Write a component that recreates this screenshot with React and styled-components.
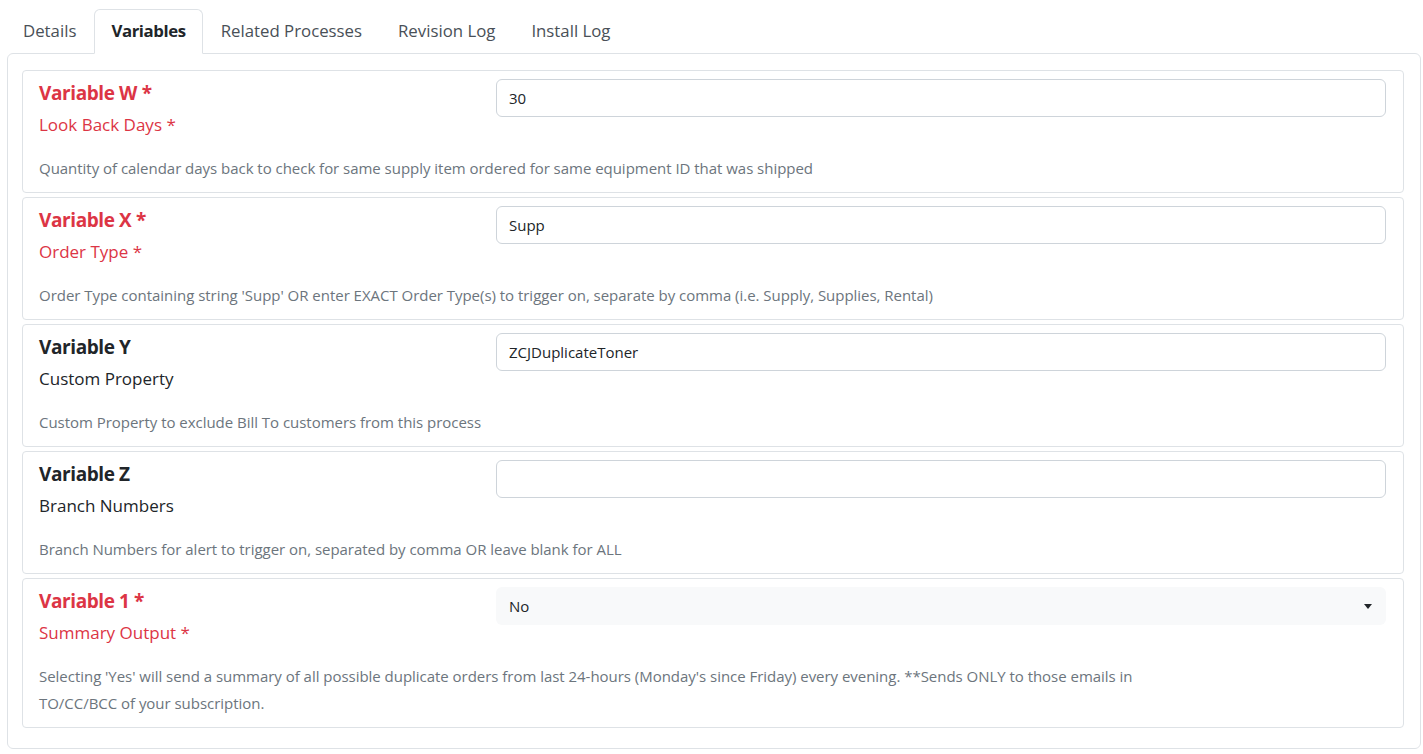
import React, { useState } from "react";
import styled, { createGlobalStyle } from "styled-components";

const GlobalStyle = createGlobalStyle`
  body {
    margin: 0;
    background: #ffffff;
    font-family: "Open Sans", "Noto Sans", sans-serif;
    color: #212529;
  }
`;

const Page = styled.div`
  padding: 9px 2px 5px 7px;
`;

const TabBar = styled.ul`
  display: flex;
  list-style: none;
  margin: 0 0 0 -2px;
  padding: 0;
  position: relative;
  z-index: 1;
`;

const Tab = styled.li`
  height: 45px;
  box-sizing: border-box;
  display: flex;
  align-items: center;
  padding: 0 ${(p) => (p.active ? 16 : 17)}px 2px;
  margin-bottom: -1px;
  font-size: 16.8px;
  color: ${(p) => (p.active ? "#212529" : "#495057")};
  font-weight: ${(p) => (p.active ? 700 : 400)};
  letter-spacing: ${(p) => (p.active ? "-0.4px" : "0")};
  border: 1px solid ${(p) => (p.active ? "#dee2e6" : "transparent")};
  border-bottom-color: ${(p) => (p.active ? "#ffffff" : "transparent")};
  border-radius: 6px 6px 0 0;
  background: ${(p) => (p.active ? "#ffffff" : "transparent")};
  cursor: pointer;
`;

const Card = styled.div`
  border: 1px solid #dee2e6;
  border-radius: 6px;
  padding: 16px 16px 20px 14px;
  display: flex;
  flex-direction: column;
  gap: 4px;
`;

const VarRow = styled.div`
  border: 1px solid #dee2e6;
  border-radius: 4px;
  padding: 7px 17px 10px 16px;
`;

const RowGrid = styled.div`
  display: grid;
  grid-template-columns: calc((100% + 24px) / 3 - 24px) 1fr;
  column-gap: 24px;
`;

const LabelCol = styled.div`
  display: flex;
  flex-direction: column;
`;

const VarTitle = styled.div`
  font-size: 19px;
  font-weight: 700;
  line-height: 30px;
  letter-spacing: -0.4px;
  color: ${(p) => (p.required ? "#dc3545" : "#212529")};
`;

const VarName = styled.div`
  margin-top: 4px;
  font-size: 17px;
  line-height: 26px;
  color: ${(p) => (p.required ? "#dc3545" : "#212529")};
`;

const TextInput = styled.input`
  margin-top: 1px;
  height: 38px;
  box-sizing: border-box;
  width: 100%;
  border: 1px solid #ced4da;
  border-radius: 6px;
  padding: 0 12px;
  font-family: inherit;
  font-size: 15px;
  color: #212529;
  background: #ffffff;
  outline: none;
`;

const SelectBox = styled.div`
  margin-top: 1px;
  height: 38px;
  box-sizing: border-box;
  width: 100%;
  border-radius: 6px;
  padding: 0 14px 0 13px;
  display: flex;
  align-items: center;
  justify-content: space-between;
  background: #f8f9fa;
  font-size: 15px;
  color: #212529;
  cursor: pointer;
`;

const Caret = styled.span`
  width: 0;
  height: 0;
  border-left: 4px solid transparent;
  border-right: 4px solid transparent;
  border-top: 5px solid #212529;
`;

const Description = styled.div`
  margin-top: 17px;
  font-size: 15px;
  line-height: 27px;
  letter-spacing: -0.03px;
  color: #6c757d;
  max-width: 1100px;
`;

const tabs = ["Details", "Variables", "Related Processes", "Revision Log", "Install Log"];

const variables = [
  {
    label: "Variable W",
    name: "Look Back Days",
    required: true,
    value: "30",
    desc: "Quantity of calendar days back to check for same supply item ordered for same equipment ID that was shipped",
  },
  {
    label: "Variable X",
    name: "Order Type",
    required: true,
    value: "Supp",
    desc: "Order Type containing string 'Supp' OR enter EXACT Order Type(s) to trigger on, separate by comma (i.e. Supply, Supplies, Rental)",
  },
  {
    label: "Variable Y",
    name: "Custom Property",
    value: "ZCJDuplicateToner",
    desc: "Custom Property to exclude Bill To customers from this process",
  },
  {
    label: "Variable Z",
    name: "Branch Numbers",
    value: "",
    desc: "Branch Numbers for alert to trigger on, separated by comma OR leave blank for ALL",
  },
  {
    label: "Variable 1",
    name: "Summary Output",
    required: true,
    select: true,
    value: "No",
    desc: "Selecting 'Yes' will send a summary of all possible duplicate orders from last 24-hours (Monday's since Friday) every evening. **Sends ONLY to those emails in TO/CC/BCC of your subscription.",
  },
];

export default function App() {
  const [active, setActive] = useState("Variables");
  return (
    <Page>
      <GlobalStyle />
      <TabBar>
        {tabs.map((t) => (
          <Tab key={t} active={t === active} onClick={() => setActive(t)}>
            {t}
          </Tab>
        ))}
      </TabBar>
      <Card>
        {variables.map((v) => (
          <VarRow key={v.label}>
            <RowGrid>
              <LabelCol>
                <VarTitle required={v.required}>
                  {v.label}
                  {v.required ? " *" : ""}
                </VarTitle>
                <VarName required={v.required}>
                  {v.name}
                  {v.required ? " *" : ""}
                </VarName>
              </LabelCol>
              <div>
                {v.select ? (
                  <SelectBox>
                    {v.value}
                    <Caret />
                  </SelectBox>
                ) : (
                  <TextInput defaultValue={v.value} />
                )}
              </div>
            </RowGrid>
            <Description>{v.desc}</Description>
          </VarRow>
        ))}
      </Card>
    </Page>
  );
}
